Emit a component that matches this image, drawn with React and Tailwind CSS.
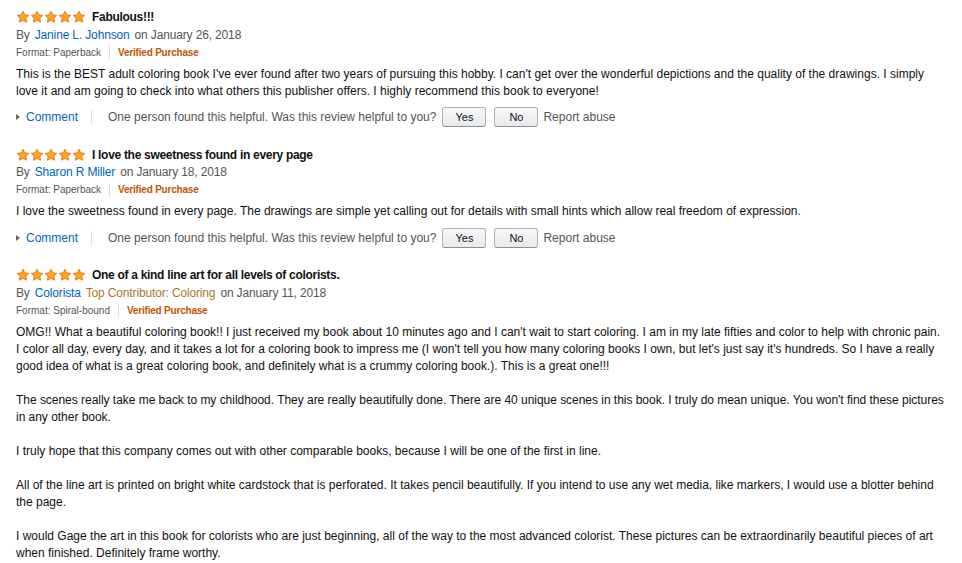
const reviews = [
  {
    id: 1,
    title: 'Fabulous!!!',
    author: 'Janine L. Johnson',
    date: 'January 26, 2018',
    format: 'Paperback',
    body: [
      "This is the BEST adult coloring book I've ever found after two years of pursuing this hobby. I can't get over the wonderful depictions and the quality of the drawings. I simply love it and am going to check into what others this publisher offers. I highly recommend this book to everyone!",
    ],
    helpful: 'One person found this helpful.',
  },
  {
    id: 2,
    title: 'I love the sweetness found in every page',
    author: 'Sharon R Miller',
    date: 'January 18, 2018',
    format: 'Paperback',
    body: [
      'I love the sweetness found in every page. The drawings are simple yet calling out for details with small hints which allow real freedom of expression.',
    ],
    helpful: 'One person found this helpful.',
  },
  {
    id: 3,
    title: 'One of a kind line art for all levels of colorists.',
    author: 'Colorista',
    badge: 'Top Contributor: Coloring',
    date: 'January 11, 2018',
    format: 'Spiral-bound',
    body: [
      "OMG!! What a beautiful coloring book!! I just received my book about 10 minutes ago and I can't wait to start coloring. I am in my late fifties and color to help with chronic pain. I color all day, every day, and it takes a lot for a coloring book to impress me (I won't tell you how many coloring books I own, but let's just say it's hundreds. So I have a really good idea of what is a great coloring book, and definitely what is a crummy coloring book.). This is a great one!!!",
      "The scenes really take me back to my childhood. They are really beautifully done. There are 40 unique scenes in this book. I truly do mean unique. You won't find these pictures in any other book.",
      'I truly hope that this company comes out with other comparable books, because I will be one of the first in line.',
      'All of the line art is printed on bright white cardstock that is perforated. It takes pencil beautifully. If you intend to use any wet media, like markers, I would use a blotter behind the page.',
      'I would Gage the art in this book for colorists who are just beginning, all of the way to the most advanced colorist. These pictures can be extraordinarily beautiful pieces of art when finished. Definitely frame worthy.',
    ],
  },
];

const Star = () => (
  <svg width="14" height="14" viewBox="0 0 24 24">
    <path
      d="M12 2l3.09 6.26L22 9.27l-5 4.87 1.18 6.88L12 17.77l-6.18 3.25L7 14.14 2 9.27l6.91-1.01L12 2z"
      fill="#ffa41c"
      stroke="#de7921"
      strokeWidth="1.5"
      strokeLinejoin="round"
    />
  </svg>
);

const VoteButton = ({ children }) => (
  <button className="w-[44px] h-[20px] rounded-[3px] border border-[#adb1b8] border-b-[#8d9096] bg-gradient-to-b from-[#f7f8fa] to-[#e7e9ec] text-[11px] leading-[18px] text-[#111]">
    {children}
  </button>
);

const Review = ({ review }) => (
  <div className="mb-[18.5px]">
    <div className="flex items-center h-[18px]">
      <div className="flex">
        {[0, 1, 2, 3, 4].map((i) => (
          <Star key={i} />
        ))}
      </div>
      <span className="ml-[6px] text-[12px] font-bold text-[#111] tracking-[-0.3px]">{review.title}</span>
    </div>
    <div className="flex items-center gap-[5px] h-[17px] text-[12px] text-[#555] tracking-[-0.15px]">
      <span>By</span>
      <span className="text-[#0066c0]">{review.author}</span>
      {review.badge && <span className="text-[#a9782f]">{review.badge}</span>}
      <span>on {review.date}</span>
    </div>
    <div className="flex items-center h-[18px] text-[10px] text-[#555]">
      <span>Format: {review.format}</span>
      <span className="mx-[8px] w-px h-[14px] bg-[#ddd]"></span>
      <span className="font-bold text-[#c45500] tracking-[-0.2px]">Verified Purchase</span>
    </div>
    <div className="mt-[4.5px] text-[12px] leading-[17px] text-[#111]">
      {review.body.map((para, i) => (
        <p key={i} className={i === 1 ? 'mt-[17px] tracking-[-0.03px]' : i > 0 ? 'mt-[17px]' : ''}>
          {para}
        </p>
      ))}
    </div>
    {review.helpful && (
      <div className="mt-[7.5px] flex items-center h-[20px] text-[12px] text-[#555]">
        <span className="w-0 h-0 border-y-[3px] border-y-transparent border-l-[4px] border-l-[#666]"></span>
        <span className="ml-[6px] text-[#0066c0]">Comment</span>
        <span className="ml-[13px] w-px h-[14px] bg-[#ddd]"></span>
        <span className="ml-[16px]">{review.helpful} Was this review helpful to you?</span>
        <span className="ml-[6px]">
          <VoteButton>Yes</VoteButton>
        </span>
        <span className="ml-[8px]">
          <VoteButton>No</VoteButton>
        </span>
        <span className="ml-[5px]">Report abuse</span>
      </div>
    )}
  </div>
);

const App = () => {
  return (
    <div className="min-h-screen bg-white pl-[16px] pr-[17px] pt-[8px] font-['Liberation_Sans',Arial,sans-serif]">
      {reviews.map((review) => (
        <Review key={review.id} review={review} />
      ))}
    </div>
  );
};

export default App;
